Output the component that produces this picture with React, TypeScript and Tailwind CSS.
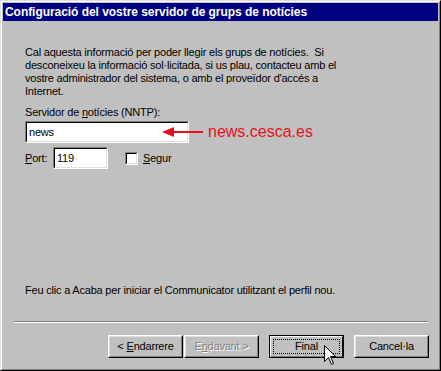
import React from "react";

const Sunken = ({ className = "", children }: { className?: string; children?: React.ReactNode }) => (
  <div className={`border border-t-[#808080] border-l-[#808080] border-r-white border-b-white ${className}`}>
    <div className="w-full h-full border border-t-black border-l-black border-r-[#dfdfdf] border-b-[#dfdfdf] bg-white flex items-center">
      {children}
    </div>
  </div>
);

const Btn = ({ children, disabled = false }: { children: React.ReactNode; disabled?: boolean }) => (
  <div className="w-[75px] h-[23px] border border-t-white border-l-white border-r-black border-b-black">
    <div
      className={`w-full h-full border border-t-[#dfdfdf] border-l-[#dfdfdf] border-r-[#808080] border-b-[#808080] flex items-center justify-center ${
        disabled ? "text-[#808080] [text-shadow:1px_1px_0_#ffffff]" : "text-black"
      }`}
    >
      {children}
    </div>
  </div>
);

export default function App() {
  return (
    <div
      className="w-[441px] h-[371px] relative overflow-hidden text-[11px] leading-[13px] text-black tracking-[-0.2px]"
      style={{ fontFamily: '"Liberation Sans", Arial, sans-serif' }}
    >
      <div className="w-full h-full border border-t-[#dfdfdf] border-l-[#dfdfdf] border-r-black border-b-black">
        <div className="w-full h-full border border-t-white border-l-white border-r-[#808080] border-b-[#808080] bg-[#c0c0c0] p-px flex flex-col">
          <div className="h-[18px] bg-[#000080] text-white font-bold text-[12px] pl-[2px] flex items-center tracking-[-0.05px]">
            Configuració del vostre servidor de grups de notícies
          </div>

          <div className="pl-[22px] mt-[25px]">
            Cal aquesta informació per poder llegir els grups de notícies.&nbsp; Si
            <br />
            desconeixeu la informació sol·licitada, si us plau, contacteu amb el
            <br />
            vostre administrador del sistema, o amb el proveïdor d'accés a
            <br />
            Internet.
          </div>

          <div className="pl-[22px] mt-[8px]">
            Servidor de <span className="underline">n</span>otícies (NNTP):
          </div>

          <div className="pl-[22px] mt-[2px] relative flex items-center">
            <Sunken className="w-[164px] h-[22px]">
              <span className="pl-[2px]">news</span>
            </Sunken>
            <svg className="absolute left-[159px] top-[6px]" width="42" height="10" viewBox="0 0 42 10">
              <polygon points="0,5 12,0 12,10" fill="#e0141e" />
              <rect x="11" y="4" width="30" height="2" fill="#e0141e" />
            </svg>
            <span className="ml-[19px] text-[16px] leading-[18px] tracking-normal text-[#e5141c]">news.cesca.es</span>
          </div>

          <div className="pl-[22px] mt-[4px] flex items-center">
            <span className="w-[28px]">
              <span className="underline">P</span>ort:
            </span>
            <Sunken className="w-[55px] h-[22px]">
              <span className="pl-[2px]">119</span>
            </Sunken>
            <div className="ml-[17px] w-[13px] h-[13px] border border-t-[#808080] border-l-[#808080] border-r-white border-b-white">
              <div className="w-full h-full border border-t-black border-l-black border-r-[#dfdfdf] border-b-[#dfdfdf] bg-white" />
            </div>
            <span className="ml-[5px]">
              <span className="underline">S</span>egur
            </span>
          </div>

          <div className="pl-[22px] mt-[115px]">
            Feu clic a Acaba per iniciar el Communicator utilitzant el perfil nou.
          </div>

          <div className="ml-[11px] w-[414px] mt-[24px] border-t border-t-[#808080] border-b border-b-white" />

          <div className="mt-[12px] flex items-center pl-[105px]">
            <Btn>
              &lt; <span className="underline ml-[3px]">E</span>ndarrere
            </Btn>
            <div className="ml-[1px]">
              <Btn disabled>
                E<span className="underline">n</span>davant &gt;
              </Btn>
            </div>
            <div className="ml-[10px] w-[75px] h-[23px] border border-black">
              <div className="w-full h-full border border-t-white border-l-white border-r-black border-b-[#808080] p-[2px]">
                <div className="w-full h-full border border-dotted border-black flex items-center justify-center">
                  Final
                </div>
              </div>
            </div>
            <div className="ml-[10px]">
              <Btn>Cancel·la</Btn>
            </div>
          </div>
        </div>
      </div>

      <svg className="absolute left-[324px] top-[345px]" width="13" height="20" viewBox="0 0 13 20">
        <path d="M0.5 0.5 L0.5 16.5 L4.5 12.5 L7.5 19.5 L9.5 18.5 L6.5 11.5 L11.5 11.5 Z" fill="#ffffff" stroke="#000000" strokeWidth="1" />
      </svg>
    </div>
  );
}
